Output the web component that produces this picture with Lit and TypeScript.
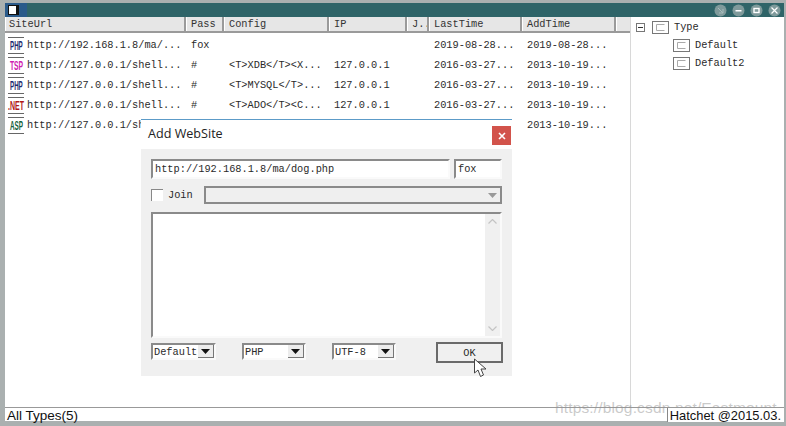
import { LitElement, html, css, svg } from "lit";
import { customElement } from "lit/decorators.js";

const cols = [
  { t: "SiteUrl", w: 181 },
  { t: "Pass", w: 38 },
  { t: "Config", w: 105 },
  { t: "IP", w: 78 },
  { t: "J..", w: 22 },
  { t: "LastTime", w: 93 },
  { t: "AddTime", w: 94 },
  { t: "", w: 14 },
];

const rows = [
  ["PHP", "#1c2a6e", "http://192.168.1.8/ma/...", "fox", "", "", "2019-08-28...", "2019-08-28..."],
  ["TSP", "#d020b0", "http://127.0.0.1/shell...", "#", "<T>XDB</T><X...", "127.0.0.1", "2016-03-27...", "2013-10-19..."],
  ["PHP", "#1c2a6e", "http://127.0.0.1/shell...", "#", "<T>MYSQL</T>...", "127.0.0.1", "2016-03-27...", "2013-10-19..."],
  [".NET", "#b01818", "http://127.0.0.1/shell...", "#", "<T>ADO</T><C...", "127.0.0.1", "2016-03-27...", "2013-10-19..."],
  ["ASP", "#14603a", "http://127.0.0.1/shell...", "", "", "", "", "2013-10-19..."],
];

const iconScale: Record<string, number> = { PHP: 0.46, TSP: 0.5, ".NET": 0.52, ASP: 0.47 };

const fileIcon = (label: string, color: string) => svg`
  <svg class="ficon" width="18" height="17" viewBox="0 0 18 17">
    <rect x="1" y="0" width="16" height="1" fill="#666"/>
    <rect x="1" y="16" width="16" height="1" fill="#666"/>
    <text transform="translate(${label.length > 3 ? 1 : 3} 13) scale(${iconScale[label]} 1)"
      font-family="Liberation Sans, sans-serif" font-size="13.5" font-weight="700"
      fill="${color}">${label}</text>
  </svg>`;

const folder = () => svg`
  <svg width="17" height="13" viewBox="0 0 17 13">
    <rect x="0.5" y="0.5" width="16" height="12" fill="#fff" stroke="#777"/>
    <path d="M12.5 3.5H4.5V9.5H12.5" fill="none" stroke="#aaa"/>
  </svg>`;

@customElement("app-root")
export class AppRoot extends LitElement {
  static styles = css`
    :host {
      display: block;
      width: 786px;
      height: 426px;
      position: relative;
      overflow: hidden;
      font-family: "Liberation Mono", monospace;
      font-size: 10.3px;
      color: #2a2a2a;
    }
    .win {
      box-sizing: border-box;
      width: 786px;
      height: 426px;
      background: #aab0b0;
      padding: 3px 2px 5px 5px;
      display: flex;
      flex-direction: column;
    }
    .title {
      height: 14px;
      background: #2f6468;
      display: flex;
      align-items: center;
      flex: none;
    }
    .appicon {
      width: 22px;
      height: 14px;
      background: #2a5a8a;
      display: flex;
      align-items: center;
      padding-left: 3px;
      box-sizing: border-box;
    }
    .appicon i {
      display: block;
      width: 7px;
      height: 8px;
      background: #fff;
      border: 1px solid #111;
      border-right-width: 3px;
    }
    .ctrls {
      margin-left: auto;
      display: flex;
      gap: 5px;
      padding-right: 3px;
    }
    .ctrls svg { display: block; }
    .main {
      flex: 1;
      min-height: 0;
      display: flex;
      background: #fff;
    }
    .list { width: 626px; flex: none; border-right: 1px solid #d8d8d8; box-sizing: border-box; }
    .head {
      display: flex;
      height: 16px;
      background: #e6e6e6;
      border-bottom: 2px solid #9a9a9a;
      box-sizing: border-box;
    }
    .head div {
      box-sizing: border-box;
      border-right: 2px solid #9a9a9a;
      border-left: 1px solid #fff;
      padding-left: 4px;
      line-height: 15px;
      white-space: nowrap;
      overflow: hidden;
      color: #333;
    }
    .head div:first-child { padding-left: 3px; }
    .head div:last-child { border-right: none; }
    .row { display: flex; height: 20px; align-items: center; }
    .rows { padding-top: 2px; }
    .cell { padding-left: 5px; box-sizing: border-box; white-space: nowrap; overflow: hidden; }
    .cell.url { display: flex; align-items: center; padding-left: 2px; gap: 2px; }
    .cell.url .ficon { flex: none; }
    .tree { flex: 1; padding: 1px 0 0 5px; }
    .node { display: flex; align-items: center; height: 18px; gap: 5px; }
    .node svg { display: block; flex: none; }
    .kid { margin-left: 37px; }
    .exp {
      width: 9px;
      height: 9px;
      box-sizing: border-box;
      border: 1px solid #777;
      margin-right: 2px;
      display: flex;
      align-items: center;
      justify-content: center;
    }
    .exp i { display: block; width: 5px; height: 1px; background: #333; }
    .status {
      height: 14px;
      flex: none;
      background: #fff;
      border-top: 1px solid #999;
      box-sizing: border-box;
      display: flex;
      justify-content: space-between;
      font-family: "Liberation Sans", sans-serif;
      font-size: 13.5px;
      line-height: 15px;
      color: #111;
      padding-left: 2px;
    }
    .hatchet {
      border-left: 1px solid #888;
      padding: 0 3px 0 2px;
      position: relative;
      z-index: 2;
      background: #fff;
      font-size: 12.9px;
      line-height: 16px;
      height: 14px;
    }
    .wm {
      position: absolute;
      left: 555px;
      top: 399px;
      z-index: 1;
      font-family: "Liberation Sans", sans-serif;
      font-size: 15.5px;
      letter-spacing: 0.15px;
      color: rgba(150, 150, 150, 0.5);
      white-space: nowrap;
    }
    .dlg {
      position: absolute;
      left: 141px;
      top: 119px;
      z-index: 3;
      width: 371px;
      height: 258px;
      background: #fff;
      border-top: 1px solid #5c9bc8;
      box-sizing: border-box;
      display: flex;
      flex-direction: column;
    }
    .dhead {
      height: 29px;
      flex: none;
      display: flex;
      align-items: center;
      justify-content: space-between;
      padding-left: 7px;
      font-family: "Open Sans", sans-serif;
      font-size: 12.6px;
      color: #222;
    }
    .dhead span { margin-bottom: 2px; }
    .close {
      width: 19px;
      height: 19px;
      background: #d2534b;
      margin: 6px 1px 0 0;
      align-self: flex-start;
      display: flex;
      align-items: center;
      justify-content: center;
    }
    .panel {
      height: 227px;
      flex: none;
      background: #f0f0f0;
      padding: 10px 10px 0;
      box-sizing: border-box;
      display: flex;
      flex-direction: column;
    }
    .r { display: flex; }
    .sunk {
      box-sizing: border-box;
      background: #fff;
      border: 2px solid #fafafa;
      border-top-color: #8a8a8a;
      border-left-color: #8a8a8a;
    }
    .r1 { height: 20px; gap: 4px; }
    .r1 .sunk { line-height: 16px; padding-left: 2px; white-space: nowrap; }
    .r2 { height: 18px; margin-top: 7px; align-items: center; }
    .chk {
      width: 12px;
      height: 12px;
      box-sizing: border-box;
      background: #fff;
      border-top: 1px solid #888;
      border-left: 1px solid #888;
      margin-right: 5px;
    }
    .join { width: 36px; }
    .combo {
      flex: 1;
      height: 18px;
      box-sizing: border-box;
      border: 2px solid #8a8a8a;
      background: #efefef;
      display: flex;
      justify-content: flex-end;
    }
    .combo b {
      width: 15px;
      display: flex;
      align-items: center;
      justify-content: center;
    }
    .text {
      height: 126px;
      margin-top: 8px;
      display: flex;
      justify-content: flex-end;
      flex: none;
    }
    .sb {
      width: 15px;
      background: #f0f0f0;
      display: flex;
      flex-direction: column;
      justify-content: space-between;
      align-items: center;
      padding: 5px 0;
      box-sizing: border-box;
    }
    .r3 { margin-top: 5px; align-items: flex-start; }
    .sel {
      box-sizing: border-box;
      height: 17px;
      background: #fff;
      border: 2px solid #fafafa;
      border-top-color: #8a8a8a;
      border-left-color: #8a8a8a;
      display: flex;
      justify-content: space-between;
      padding-left: 1px;
      line-height: 14px;
      flex: none;
      white-space: nowrap;
    }
    .sel b {
      width: 16px;
      height: 13px;
      background: #ececec;
      border-right: 1px solid #777;
      border-bottom: 1px solid #777;
      box-sizing: border-box;
      display: flex;
      align-items: center;
      justify-content: center;
    }
    .s1 { width: 65px; margin-right: 26px; }
    .s2 { width: 64px; margin-right: 26px; }
    .s3 { width: 64px; margin-right: 40px; }
    .ok {
      width: 67px;
      height: 21px;
      margin-top: -1px;
      box-sizing: border-box;
      border: 2px solid #6a6a6a;
      background: #f0f0f0;
      text-align: center;
      line-height: 18px;
      flex: none;
    }
    .cursor { position: absolute; left: 473px; top: 358px; z-index: 4; }
    svg { display: block; }
  `;

  private ctrl(kind: string) {
    const marks: Record<string, unknown> = {
      d: svg`<path d="M4 4L9 9M9 5V9H5" stroke="#a8bcbc" fill="none"/>`,
      m: svg`<rect x="3.5" y="6" width="6" height="1.5" fill="#fff"/>`,
      r: svg`<rect x="4" y="4.5" width="5" height="4" fill="none" stroke="#fff" stroke-width="1.4"/>`,
      c: svg`<path d="M3.5 3.5L9.5 9.5M9.5 3.5L3.5 9.5" stroke="#fff" stroke-width="1.2"/>`,
    };
    return html`<svg width="13" height="13" viewBox="0 0 13 13">
      <circle cx="6.5" cy="6.5" r="6" fill="#7f9a9b"></circle>${marks[kind]}
    </svg>`;
  }

  render() {
    const arrow = html`<svg width="9" height="5" viewBox="0 0 9 5"><path d="M0 0H9L4.5 5Z" fill="#111"></path></svg>`;
    return html`
      <div class="win">
        <div class="title">
          <div class="appicon"><i></i></div>
          <div class="ctrls">${this.ctrl("d")}${this.ctrl("m")}${this.ctrl("r")}${this.ctrl("c")}</div>
        </div>
        <div class="main">
          <div class="list">
            <div class="head">
              ${cols.map((c) => html`<div style="width:${c.w}px">${c.t}</div>`)}
            </div>
            <div class="rows">
              ${rows.map(
                (r) => html`<div class="row">
                  <div class="cell url" style="width:${cols[0].w}px">${fileIcon(r[0], r[1])}<span>${r[2]}</span></div>
                  <div class="cell" style="width:${cols[1].w}px">${r[3]}</div>
                  <div class="cell" style="width:${cols[2].w}px">${r[4]}</div>
                  <div class="cell" style="width:${cols[3].w}px">${r[5]}</div>
                  <div class="cell" style="width:${cols[4].w}px"></div>
                  <div class="cell" style="width:${cols[5].w}px">${r[6]}</div>
                  <div class="cell" style="width:${cols[6].w}px">${r[7]}</div>
                </div>`
              )}
            </div>
          </div>
          <div class="tree">
            <div class="node"><div class="exp"><i></i></div>${folder()}<span>Type</span></div>
            <div class="node kid">${folder()}<span>Default</span></div>
            <div class="node kid">${folder()}<span>Default2</span></div>
          </div>
        </div>
        <div class="status">
          <span>All Types(5)</span>
          <span class="hatchet">Hatchet @2015.03.</span>
        </div>
      </div>
      <div class="wm">https://blog.csdn.net/Eastmount</div>
      <div class="dlg">
        <div class="dhead">
          <span>Add WebSite</span>
          <div class="close">
            <svg width="8" height="8" viewBox="0 0 8 8"><path d="M1 1L7 7M7 1L1 7" stroke="#fff" stroke-width="1.6"></path></svg>
          </div>
        </div>
        <div class="panel">
          <div class="r r1">
            <div class="sunk" style="width:299px">http://192.168.1.8/ma/dog.php</div>
            <div class="sunk" style="width:48px">fox</div>
          </div>
          <div class="r r2">
            <div class="chk"></div>
            <span class="join">Join</span>
            <div class="combo">
              <b><svg width="9" height="5" viewBox="0 0 9 5"><path d="M0 0H9L4.5 5Z" fill="#999"></path></svg></b>
            </div>
          </div>
          <div class="sunk text">
            <div class="sb">
              <svg width="9" height="5" viewBox="0 0 9 5"><path d="M0.5 4.5L4.5 0.5L8.5 4.5" fill="none" stroke="#c4c4c4" stroke-width="1.2"></path></svg>
              <svg width="9" height="5" viewBox="0 0 9 5"><path d="M0.5 0.5L4.5 4.5L8.5 0.5" fill="none" stroke="#c4c4c4" stroke-width="1.2"></path></svg>
            </div>
          </div>
          <div class="r r3">
            <div class="sel s1"><span>Default</span><b>${arrow}</b></div>
            <div class="sel s2"><span>PHP</span><b>${arrow}</b></div>
            <div class="sel s3"><span>UTF-8</span><b>${arrow}</b></div>
            <div class="ok">OK</div>
          </div>
        </div>
      </div>
      <svg class="cursor" width="15" height="20" viewBox="0 0 15 20">
        <path d="M1.5 1V15L5 12L7.5 18.5L10.5 17L8 11H13Z" fill="#fff" stroke="#444"></path>
      </svg>
    `;
  }
}
